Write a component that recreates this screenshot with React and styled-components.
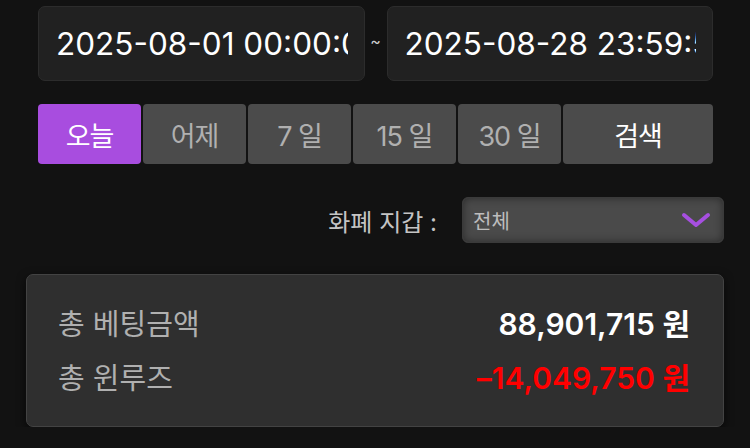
import React from "react";
import styled, { createGlobalStyle } from "styled-components";

const GlobalStyle = createGlobalStyle`
  html, body {
    margin: 0;
    padding: 0;
    background: #121212;
  }
  body {
    font-family: Inter, "Noto Sans CJK KR", "Noto Sans", sans-serif;
    color: #fff;
  }
`;

const periods = ["오늘", "어제", "7 일", "15 일", "30 일"];

function App() {
  return (
    <>
      <GlobalStyle />
      <Page>
        <DateRow>
          <DateInput readOnly value="2025-08-01 00:00:00" />
          <Tilde>~</Tilde>
          <DateInput readOnly value="2025-08-28 23:59:59" />
        </DateRow>

        <ButtonRow>
          {periods.map((p, i) => (
            <PeriodButton key={p} $active={i === 0}>
              {p}
            </PeriodButton>
          ))}
          <SearchButton>검색</SearchButton>
        </ButtonRow>

        <CurrencyRow>
          <CurrencyLabel>화폐 지갑 :</CurrencyLabel>
          <Select>
            <span>전체</span>
            <svg width="30" height="16" viewBox="0 0 30 16">
              <polyline
                points="3,3 15,13 27,3"
                fill="none"
                stroke="#a64fe0"
                strokeWidth="4"
                strokeLinecap="round"
                strokeLinejoin="round"
              />
            </svg>
          </Select>
        </CurrencyRow>

        <SummaryCard>
          <SummaryRow>
            <Label>총 베팅금액</Label>
            <Value>88,901,715 원</Value>
          </SummaryRow>
          <SummaryRow>
            <Label>총 윈루즈</Label>
            <Value $negative>–14,049,750 원</Value>
          </SummaryRow>
        </SummaryCard>
      </Page>
    </>
  );
}

export default App;

const Page = styled.div`
  width: 698px;
  padding: 6px 0 0 26px;
  display: flex;
  flex-direction: column;
`;

const DateRow = styled.div`
  display: flex;
  align-items: center;
  margin: 0 11px 0 12px;
  height: 75px;
`;

const DateInput = styled.input`
  flex: 1;
  min-width: 0;
  height: 75px;
  box-sizing: border-box;
  background: #212121;
  border: 1px solid #2c2c2c;
  border-radius: 7px;
  padding: 0 16px 0 17px;
  color: #fff;
  font-family: Inter, "Noto Sans CJK KR", sans-serif;
  font-size: 31.5px;
  outline: none;
`;

const Tilde = styled.span`
  width: 22px;
  text-align: center;
  color: #ccc;
  font-size: 16px;
  margin-top: -6px;
`;

const ButtonRow = styled.div`
  display: flex;
  gap: 2px;
  margin: 23px 11px 0 12px;
  height: 60px;
`;

const PeriodButton = styled.button`
  width: 103px;
  height: 60px;
  border: none;
  border-radius: 4px;
  background: ${(p) => (p.$active ? "#a84ddf" : "#4b4b4b")};
  color: ${(p) => (p.$active ? "#fff" : "#b0b0b0")};
  font-family: Inter, "Noto Sans CJK KR", sans-serif;
  font-size: 27px;
  letter-spacing: -1px;
  padding: 0;
  cursor: pointer;
`;

const SearchButton = styled(PeriodButton)`
  width: 150px;
  background: #4b4b4b;
  color: #fff;
`;

const CurrencyRow = styled.div`
  display: flex;
  justify-content: flex-end;
  align-items: center;
  gap: 25px;
  margin-top: 33px;
`;

const CurrencyLabel = styled.span`
  font-size: 24px;
  color: #c4c4c4;
`;

const Select = styled.div`
  width: 262px;
  height: 46px;
  box-sizing: border-box;
  display: flex;
  align-items: center;
  justify-content: space-between;
  padding: 0 12px 0 10px;
  background: #4a4a4a;
  border: 1px solid #3a3a3a;
  border-radius: 6px;
  box-shadow: inset 0 0 8px rgba(0, 0, 0, 0.45);

  span {
    font-size: 20px;
    color: #bdbdbd;
  }
`;

const SummaryCard = styled.div`
  margin-top: 31px;
  height: 153px;
  box-sizing: border-box;
  padding: 27px 33px 0 31px;
  background: #2f2f2f;
  border: 1px solid #434343;
  border-radius: 7px;
  box-shadow: 0 3px 10px rgba(0, 0, 0, 0.6);
  display: flex;
  flex-direction: column;
  gap: 14px;
`;

const SummaryRow = styled.div`
  display: flex;
  justify-content: space-between;
  align-items: center;
  height: 40px;
`;

const Label = styled.span`
  font-size: 29px;
  color: #b0b0b0;
`;

const Value = styled.span`
  font-size: 30px;
  font-weight: 600;
  color: ${(p) => (p.$negative ? "#ff0000" : "#ffffff")};
`;
